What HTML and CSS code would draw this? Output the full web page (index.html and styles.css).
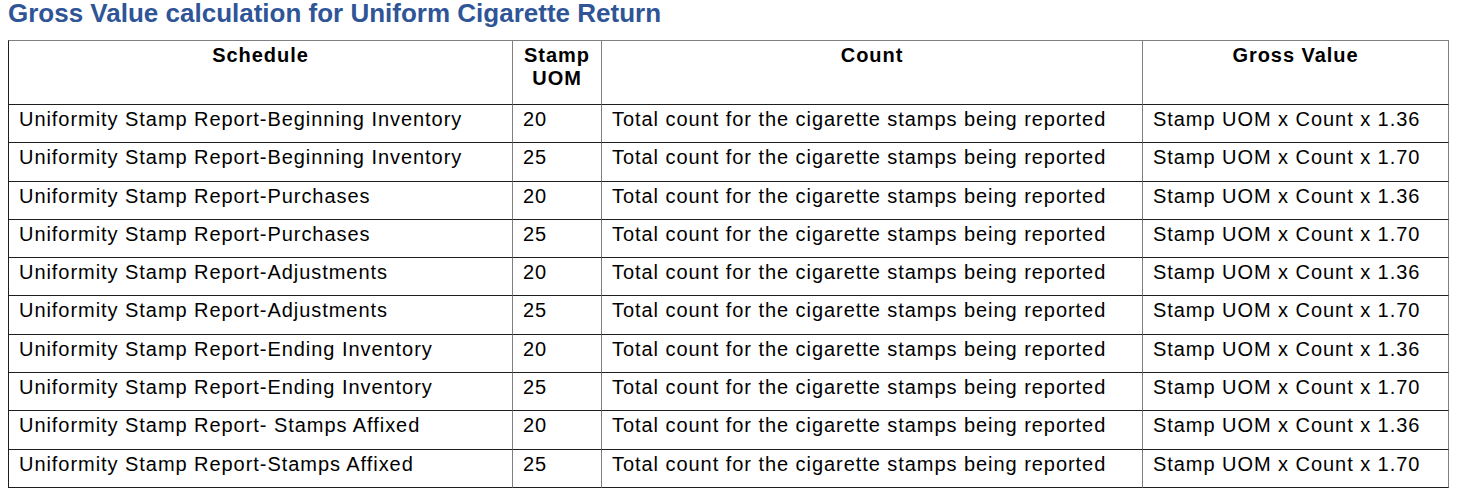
FILE: index.html
```html
<!DOCTYPE html>
<html lang="en">
<head>
<meta charset="utf-8">
<title>Gross Value calculation for Uniform Cigarette Return</title>
<link rel="stylesheet" href="styles.css">
</head>
<body>
<h1 class="title">Gross Value calculation for Uniform Cigarette Return</h1>
<table class="grid">
  <thead>
    <tr>
      <th class="c1 first">Schedule</th>
      <th class="c2">Stamp UOM</th>
      <th class="c3">Count</th>
      <th class="c4">Gross Value</th>
    </tr>
  </thead>
  <tbody>
    <tr><td class="first">Uniformity Stamp Report-Beginning Inventory</td><td>20</td><td>Total count for the cigarette stamps being reported</td><td>Stamp UOM x Count x 1.36</td></tr>
    <tr><td class="first">Uniformity Stamp Report-Beginning Inventory</td><td>25</td><td>Total count for the cigarette stamps being reported</td><td>Stamp UOM x Count x 1.70</td></tr>
    <tr><td class="first">Uniformity Stamp Report-Purchases</td><td>20</td><td>Total count for the cigarette stamps being reported</td><td>Stamp UOM x Count x 1.36</td></tr>
    <tr><td class="first">Uniformity Stamp Report-Purchases</td><td>25</td><td>Total count for the cigarette stamps being reported</td><td>Stamp UOM x Count x 1.70</td></tr>
    <tr><td class="first">Uniformity Stamp Report-Adjustments</td><td>20</td><td>Total count for the cigarette stamps being reported</td><td>Stamp UOM x Count x 1.36</td></tr>
    <tr><td class="first">Uniformity Stamp Report-Adjustments</td><td>25</td><td>Total count for the cigarette stamps being reported</td><td>Stamp UOM x Count x 1.70</td></tr>
    <tr><td class="first">Uniformity Stamp Report-Ending Inventory</td><td>20</td><td>Total count for the cigarette stamps being reported</td><td>Stamp UOM x Count x 1.36</td></tr>
    <tr><td class="first">Uniformity Stamp Report-Ending Inventory</td><td>25</td><td>Total count for the cigarette stamps being reported</td><td>Stamp UOM x Count x 1.70</td></tr>
    <tr><td class="first">Uniformity Stamp Report- Stamps Affixed</td><td>20</td><td>Total count for the cigarette stamps being reported</td><td>Stamp UOM x Count x 1.36</td></tr>
    <tr><td class="first">Uniformity Stamp Report-Stamps Affixed</td><td>25</td><td>Total count for the cigarette stamps being reported</td><td>Stamp UOM x Count x 1.70</td></tr>
  </tbody>
</table>
</body>
</html>
```

FILE: styles.css
```css
html, body {
  background: #ffffff;
}

body {
  margin: 0 8px 8px 8px;
  padding-top: 1px;
  font-family: "Liberation Sans", Arial, sans-serif;
  color: #000000;
}

.title {
  margin: 0 0 15px 0;
  font-size: 26px;
  line-height: 24px;
  font-weight: bold;
  color: #2f5597;
  white-space: nowrap;
}

.grid {
  width: 1441px;
  table-layout: fixed;
  border-collapse: separate;
  border-spacing: 0;
  font-size: 20px;
  letter-spacing: 0.95px;
}

.grid th,
.grid td {
  box-sizing: border-box;
  border-right: 1px solid #808080;
  border-bottom: 1px solid #1e1e1e;
  padding: 3px 10px 11.3px 10px;
  line-height: 23px;
  vertical-align: top;
  text-align: left;
  font-weight: normal;
}

.grid th {
  border-top: 1px solid #808080;
  padding-bottom: 14px;
  text-align: center;
  font-weight: bold;
}

.grid .first {
  border-left: 1px solid #1e1e1e;
}

.c1 { width: 505px; }
.c2 { width: 89px; }
.c3 { width: 541px; }
.c4 { width: 306px; }
```
